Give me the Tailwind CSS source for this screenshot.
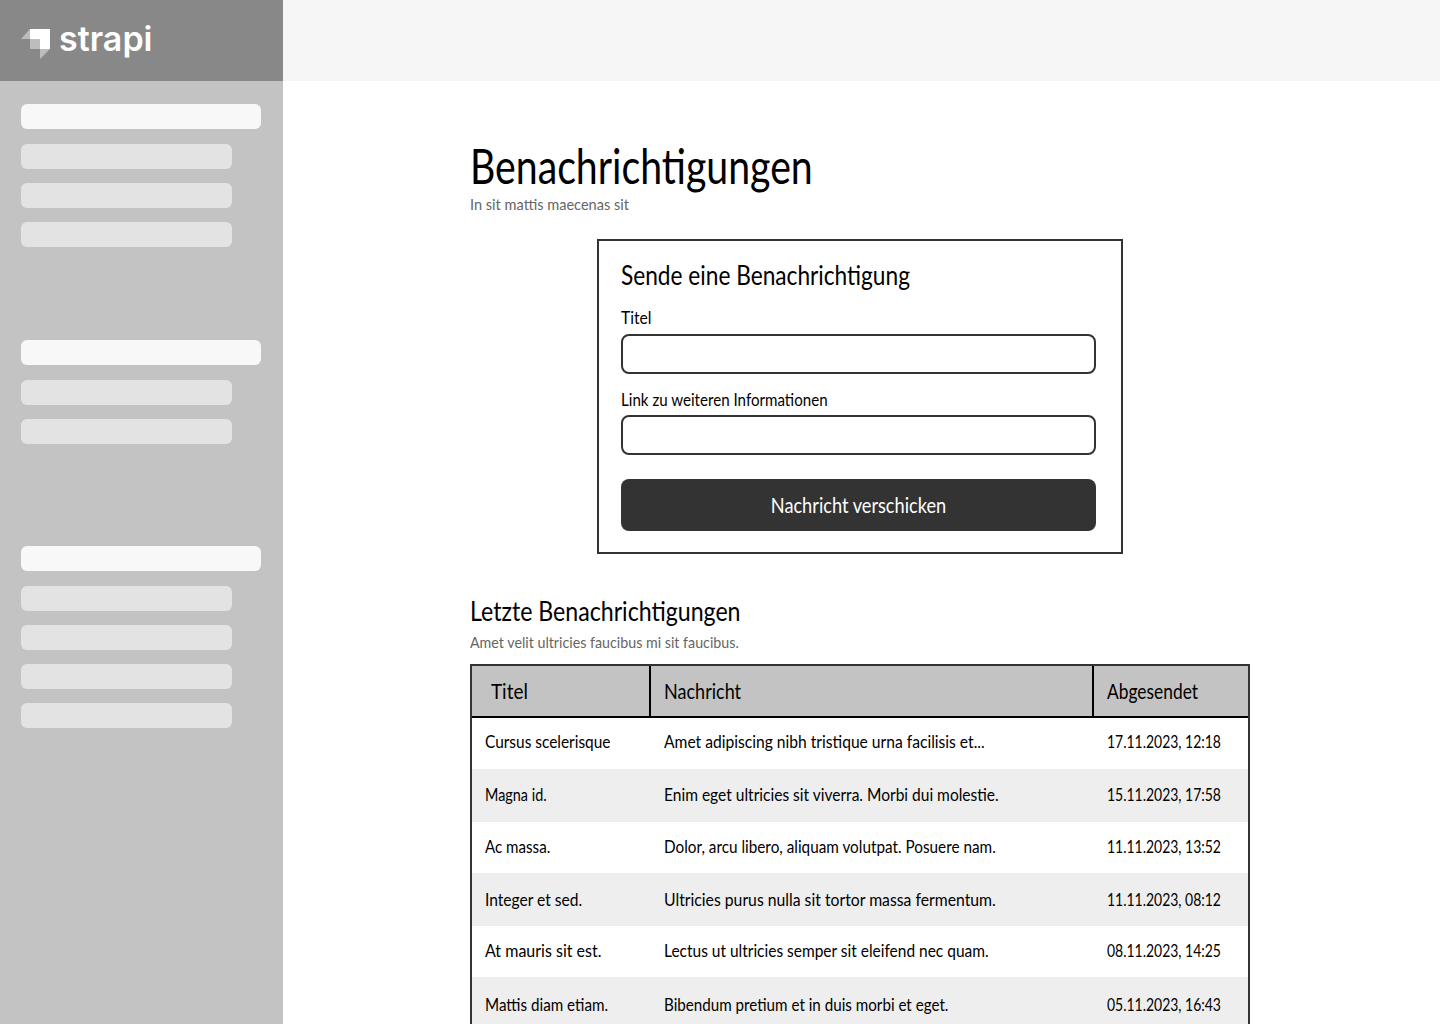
<!DOCTYPE html>
<html lang="de">
<head>
<meta charset="utf-8">
<script src="https://cdn.jsdelivr.net/npm/@tailwindcss/browser@4"></script>
<title>Benachrichtigungen</title>
</head>
<body class="h-[1024px] overflow-hidden bg-white font-['Lato',sans-serif] text-black">
<div class="flex h-[1024px]">
  <aside class="flex w-[283px] shrink-0 flex-col bg-[#c3c3c3]">
    <div class="flex h-[81px] items-start gap-[9px] bg-[#888888] pl-[21px] pt-[29px]">
      <svg width="29" height="30" viewBox="0 0 29 30" aria-hidden="true">
        <path d="M9 0H29V20H19V10H9Z" fill="#fff"/>
        <path d="M9 0V10H0Z" fill="#fff" fill-opacity=".45"/>
        <path d="M9 10H19V20H9Z" fill="#fff" fill-opacity=".45"/>
        <path d="M19 20H29L19 30Z" fill="#fff" fill-opacity=".45"/>
      </svg>
      <span class="-mt-[14px] font-['Inter',sans-serif] text-[34px] leading-[48px] font-semibold text-white">strapi</span>
    </div>
    <div class="flex flex-col pl-[21px] pt-[23px]">
      <div class="h-[25px] w-[240px] rounded-[6px] bg-[#f8f8f8]"></div>
      <div class="mt-[15px] h-[25px] w-[211px] rounded-[6px] bg-[#e3e3e3]"></div>
      <div class="mt-[14px] h-[25px] w-[211px] rounded-[6px] bg-[#e3e3e3]"></div>
      <div class="mt-[14px] h-[25px] w-[211px] rounded-[6px] bg-[#e3e3e3]"></div>
      <div class="mt-[93px] h-[25px] w-[240px] rounded-[6px] bg-[#f8f8f8]"></div>
      <div class="mt-[15px] h-[25px] w-[211px] rounded-[6px] bg-[#e3e3e3]"></div>
      <div class="mt-[14px] h-[25px] w-[211px] rounded-[6px] bg-[#e3e3e3]"></div>
      <div class="mt-[102px] h-[25px] w-[240px] rounded-[6px] bg-[#f8f8f8]"></div>
      <div class="mt-[15px] h-[25px] w-[211px] rounded-[6px] bg-[#e3e3e3]"></div>
      <div class="mt-[14px] h-[25px] w-[211px] rounded-[6px] bg-[#e3e3e3]"></div>
      <div class="mt-[14px] h-[25px] w-[211px] rounded-[6px] bg-[#e3e3e3]"></div>
      <div class="mt-[14px] h-[25px] w-[211px] rounded-[6px] bg-[#e3e3e3]"></div>
    </div>
  </aside>
  <main class="min-w-0 flex-1">
    <div class="h-[81px] bg-[#f6f6f6]"></div>
    <div class="w-[780px] ml-[187px] pt-[56px]">
      <h1 class="h-[57px] origin-left scale-x-[.817] whitespace-nowrap text-[48px] leading-[58px] font-normal">Benachrichtigungen</h1>
      <p class="h-[20px] origin-left scale-x-[.97] text-[15px] leading-[20px] text-[#666666]">In sit mattis maecenas sit</p>
      <section class="ml-[127px] mt-[25px] h-[315px] w-[526px] border-2 border-[#333333] pl-[22px] pt-[14px]">
        <h2 class="h-[46px] origin-left scale-x-[.84] whitespace-nowrap text-[27px] leading-[40px] font-normal">Sende eine Benachrichtigung</h2>
        <label class="mt-[4px] block h-[24px] origin-left scale-x-[.87] text-[18px] leading-[24px]">Titel</label>
        <div class="mt-[5px] h-[40px] w-[475px] rounded-[8px] border-2 border-[#333333]"></div>
        <label class="mt-[13px] block h-[24px] origin-left scale-x-[.84] text-[18px] leading-[24px]">Link zu weiteren Informationen</label>
        <div class="mt-[4px] h-[40px] w-[475px] rounded-[8px] border-2 border-[#333333]"></div>
        <button class="mt-[24px] h-[52px] w-[475px] rounded-[8px] bg-[#333333] text-[21px] text-white"><span class="block scale-x-[.866]">Nachricht verschicken</span></button>
      </section>
      <h2 class="mt-[39px] h-[37px] origin-left scale-x-[.857] whitespace-nowrap text-[27px] leading-[36px] font-normal">Letzte Benachrichtigungen</h2>
      <p class="mt-[2px] h-[20px] origin-left scale-x-[.95] text-[15px] leading-[20px] text-[#666666]">Amet velit ultricies faucibus mi sit faucibus.</p>
      <div class="mt-[12px] w-[780px] border-x-2 border-t-2 border-[#333333]">
        <div class="grid h-[52px] grid-cols-[179px_443px_154px] border-b-2 border-black bg-[#c3c3c3] text-[22px] leading-[50px]">
          <div class="border-r-2 border-black pl-[19px]"><span class="block origin-left scale-x-[.86]">Titel</span></div>
          <div class="border-r-2 border-black pl-[13px]"><span class="block origin-left scale-x-[.82]">Nachricht</span></div>
          <div class="pl-[13px]"><span class="block origin-left scale-x-[.79]">Abgesendet</span></div>
        </div>
        <div class="grid h-[51px] grid-cols-[179px_443px_154px] items-center whitespace-nowrap pb-[4px] text-[18px]">
          <div class="pl-[13px]"><span class="block origin-left scale-x-[.857]">Cursus scelerisque</span></div><div class="pl-[13px]"><span class="block origin-left scale-x-[.868]">Amet adipiscing nibh tristique urna facilisis et...</span></div><div class="pl-[13px]"><span class="block origin-left scale-x-[.775]">17.11.2023, 12:18</span></div>
        </div>
        <div class="grid h-[53px] grid-cols-[179px_443px_154px] items-center whitespace-nowrap bg-[#eeeeee] pb-[2px] text-[18px]">
          <div class="pl-[13px]"><span class="block origin-left scale-x-[.8]">Magna id.</span></div><div class="pl-[13px]"><span class="block origin-left scale-x-[.863]">Enim eget ultricies sit viverra. Morbi dui molestie.</span></div><div class="pl-[13px]"><span class="block origin-left scale-x-[.775]">15.11.2023, 17:58</span></div>
        </div>
        <div class="grid h-[51px] grid-cols-[179px_443px_154px] items-center whitespace-nowrap pb-[2px] text-[18px]">
          <div class="pl-[13px]"><span class="block origin-left scale-x-[.84]">Ac massa.</span></div><div class="pl-[13px]"><span class="block origin-left scale-x-[.85]">Dolor, arcu libero, aliquam volutpat. Posuere nam.</span></div><div class="pl-[13px]"><span class="block origin-left scale-x-[.775]">11.11.2023, 13:52</span></div>
        </div>
        <div class="grid h-[53px] grid-cols-[179px_443px_154px] items-center whitespace-nowrap bg-[#eeeeee] text-[18px]">
          <div class="pl-[13px]"><span class="block origin-left scale-x-[.865]">Integer et sed.</span></div><div class="pl-[13px]"><span class="block origin-left scale-x-[.875]">Ultricies purus nulla sit tortor massa fermentum.</span></div><div class="pl-[13px]"><span class="block origin-left scale-x-[.775]">11.11.2023, 08:12</span></div>
        </div>
        <div class="grid h-[51px] grid-cols-[179px_443px_154px] items-center whitespace-nowrap pb-[2px] text-[18px]">
          <div class="pl-[13px]"><span class="block origin-left scale-x-[.89]">At mauris sit est.</span></div><div class="pl-[13px]"><span class="block origin-left scale-x-[.86]">Lectus ut ultricies semper sit eleifend nec quam.</span></div><div class="pl-[13px]"><span class="block origin-left scale-x-[.775]">08.11.2023, 14:25</span></div>
        </div>
        <div class="grid h-[53px] grid-cols-[179px_443px_154px] items-center whitespace-nowrap bg-[#eeeeee] pt-[2px] text-[18px]">
          <div class="pl-[13px]"><span class="block origin-left scale-x-[.845]">Mattis diam etiam.</span></div><div class="pl-[13px]"><span class="block origin-left scale-x-[.843]">Bibendum pretium et in duis morbi et eget.</span></div><div class="pl-[13px]"><span class="block origin-left scale-x-[.775]">05.11.2023, 16:43</span></div>
        </div>
      </div>
    </div>
  </main>
</div>
</body>
</html>
